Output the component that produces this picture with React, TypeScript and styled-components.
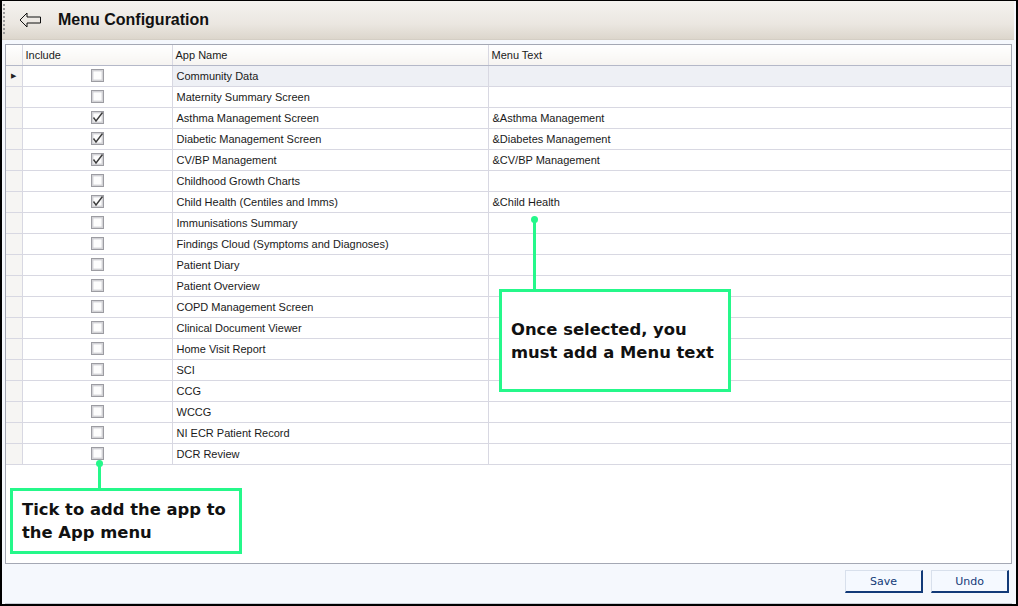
import React from 'react'
import styled, { createGlobalStyle } from 'styled-components'

const GlobalStyle = createGlobalStyle`
  html, body {
    margin: 0;
    padding: 0;
    background: #ffffff;
  }
  body {
    font-family: "Liberation Sans", Arial, sans-serif;
  }
`

const Frame = styled.div`
  position: relative;
  width: 1018px;
  height: 606px;
  box-sizing: border-box;
  border: 2px solid #000;
  border-top-width: 1px;
  background: #f5f8fd;
  display: flex;
  flex-direction: column;
  overflow: hidden;
`

const TitleBar = styled.div`
  height: 38px;
  margin-right: 2px;
  display: flex;
  align-items: center;
  background: linear-gradient(#f4f2ef, #ebe7e1 60%, #dcd6cc);
  border-bottom: 1px solid #d4cec4;
`

const Grip = styled.div`
  width: 2px;
  height: 32px;
  margin-left: 1px;
  background: repeating-linear-gradient(#9a9a9a 0 2px, transparent 2px 4px);
`

const BackButton = styled.button`
  appearance: none;
  border: none;
  background: transparent;
  padding: 0;
  margin-left: 14px;
  width: 24px;
  height: 16px;
  display: flex;
  align-items: center;
  cursor: pointer;
`

const Title = styled.h1`
  margin: 0 0 0 15px;
  font-size: 16px;
  font-weight: bold;
  color: #111;
`

const Body = styled.div`
  flex: 1;
  display: flex;
  flex-direction: column;
  padding: 4px 4px 0 3px;
`

const GridBox = styled.div`
  height: 520px;
  width: 1007px;
  box-sizing: border-box;
  border: 1px solid #a4a8b4;
  background: #fff;
`

const Table = styled.table`
  border-collapse: collapse;
  table-layout: fixed;
  width: 100%;
  font-size: 11px;
  color: #1a1a1a;
`

const HeadCell = styled.th<{ $w?: number }>`
  width: ${(p) => (p.$w ? `${p.$w}px` : 'auto')};
  height: 20px;
  padding: 0 0 0 3px;
  text-align: left;
  font-weight: normal;
  background: linear-gradient(#ffffff, #f6f4f1);
  border-right: 1px solid #d8d8e2;
  border-bottom: 1px solid #b4b8c8;
  box-sizing: border-box;
  &:last-child {
    border-right: none;
  }
`

const Row = styled.tr<{ $current?: boolean }>`
  height: 21px;
  td {
    background: ${(p) => (p.$current ? '#eef0f5' : '#fff')};
  }
`

const RowHead = styled.td`
  && {
    background: #f6f5f3;
  }
  border-right: 1px solid #d8d8e2;
  border-bottom: 1px solid #d8d8e2;
  padding: 0 0 0 5px;
  text-align: left;
  color: #222;
  font-size: 7px;
`

const CheckCell = styled.td`
  && {
    background: #fff;
  }
  border-right: 1px solid #d8d8e2;
  border-bottom: 1px solid #d8d8e2;
  text-align: center;
  padding: 0;
  vertical-align: middle;
`

const TextCell = styled.td`
  border-right: 1px solid #d8d8e2;
  border-bottom: 1px solid #d8d8e2;
  padding: 0 0 0 4px;
  white-space: nowrap;
  overflow: hidden;
  &:last-child {
    border-right: none;
  }
`

const CheckBoxWrap = styled.span`
  display: inline-flex;
  vertical-align: middle;
`

const Footer = styled.div`
  flex: 1;
  display: flex;
  justify-content: flex-end;
  align-items: flex-start;
  gap: 8px;
  padding: 6px 3px 0 0;
  border-bottom: 1px solid #c8ccd4;
`

const FootButton = styled.button`
  appearance: none;
  width: 78px;
  height: 23px;
  box-sizing: border-box;
  background: #f5f9ff;
  border: 1px solid #d8e0ec;
  border-right: 2px solid #123a78;
  border-bottom: 2px solid #123a78;
  font-family: "DejaVu Sans", Tahoma, sans-serif;
  font-size: 11px;
  color: #123a78;
  padding: 0;
  cursor: pointer;
`

const Callout = styled.div<{ $x: number; $y: number; $w: number; $h: number }>`
  position: absolute;
  left: ${(p) => p.$x}px;
  top: ${(p) => p.$y}px;
  width: ${(p) => p.$w}px;
  height: ${(p) => p.$h}px;
  box-sizing: border-box;
  border: 3px solid #25f88a;
  background: #fff;
  display: flex;
  align-items: center;
  padding-left: 9px;
  font-family: "DejaVu Sans", sans-serif;
  font-weight: bold;
  font-size: 16.4px;
  line-height: 23px;
  color: #111;
`

const Connector = styled.div<{ $x: number; $y: number; $h: number }>`
  position: absolute;
  left: ${(p) => p.$x - 1}px;
  top: ${(p) => p.$y}px;
  width: 3px;
  height: ${(p) => p.$h}px;
  background: #25f88a;
  &::before {
    content: '';
    position: absolute;
    left: -2px;
    top: -3px;
    width: 7px;
    height: 7px;
    border-radius: 50%;
    background: #25f88a;
  }
`

const apps: { name: string; menu: string; on: boolean }[] = [
  { name: 'Community Data', menu: '', on: false },
  { name: 'Maternity Summary Screen', menu: '', on: false },
  { name: 'Asthma Management Screen', menu: '&Asthma Management', on: true },
  { name: 'Diabetic Management Screen', menu: '&Diabetes Management', on: true },
  { name: 'CV/BP Management', menu: '&CV/BP Management', on: true },
  { name: 'Childhood Growth Charts', menu: '', on: false },
  { name: 'Child Health (Centiles and Imms)', menu: '&Child Health', on: true },
  { name: 'Immunisations Summary', menu: '', on: false },
  { name: 'Findings Cloud (Symptoms and Diagnoses)', menu: '', on: false },
  { name: 'Patient Diary', menu: '', on: false },
  { name: 'Patient Overview', menu: '', on: false },
  { name: 'COPD Management Screen', menu: '', on: false },
  { name: 'Clinical Document Viewer', menu: '', on: false },
  { name: 'Home Visit Report', menu: '', on: false },
  { name: 'SCI', menu: '', on: false },
  { name: 'CCG', menu: '', on: false },
  { name: 'WCCG', menu: '', on: false },
  { name: 'NI ECR Patient Record', menu: '', on: false },
  { name: 'DCR Review', menu: '', on: false },
]

function CheckBox({ checked }: { checked: boolean }) {
  return (
    <CheckBoxWrap>
      <svg width="13" height="13" viewBox="0 0 13 13">
        <rect x="0.5" y="0.5" width="12" height="12" fill="#d6d6d8" stroke="#9c9ca2" />
        <rect x="2" y="2" width="9" height="9" fill="#fdfdfd" stroke="#cfcfd4" strokeWidth="0.8" />
        {checked && (
          <path d="M2.5 6.5 L5 10 L11.5 1.5" fill="none" stroke="#3c3c3c" strokeWidth="1.4" />
        )}
      </svg>
    </CheckBoxWrap>
  )
}

function App() {
  return (
    <>
      <GlobalStyle />
      <Frame>
        <TitleBar>
          <Grip />
          <BackButton aria-label="Back">
            <svg width="23" height="16" viewBox="0 0 23 16">
              <path
                d="M1 8 L8 1 L8 5 L21.5 5 L21.5 11 L8 11 L8 15 Z"
                fill="none"
                stroke="#111"
                strokeWidth="1"
              />
            </svg>
          </BackButton>
          <Title>Menu Configuration</Title>
        </TitleBar>
        <Body>
          <GridBox>
            <Table>
              <thead>
                <tr>
                  <HeadCell $w={16} />
                  <HeadCell $w={150}>Include</HeadCell>
                  <HeadCell $w={316}>App Name</HeadCell>
                  <HeadCell>Menu Text</HeadCell>
                </tr>
              </thead>
              <tbody>
                {apps.map((a, i) => (
                  <Row key={a.name} $current={i === 0}>
                    <RowHead>{i === 0 ? '▶' : ''}</RowHead>
                    <CheckCell>
                      <CheckBox checked={a.on} />
                    </CheckCell>
                    <TextCell>{a.name}</TextCell>
                    <TextCell>{a.menu}</TextCell>
                  </Row>
                ))}
              </tbody>
            </Table>
          </GridBox>
          <Footer>
            <FootButton>Save</FootButton>
            <FootButton>Undo</FootButton>
          </Footer>
        </Body>
        <Connector $x={97} $y={462} $h={27} />
        <Callout $x={8} $y={487} $w={232} $h={66}>
          Tick to add the app to
          <br />
          the App menu
        </Callout>
        <Connector $x={532} $y={218} $h={72} />
        <Callout $x={497} $y={288} $w={232} $h={103}>
          Once selected, you
          <br />
          must add a Menu text
        </Callout>
      </Frame>
    </>
  )
}

export default App
